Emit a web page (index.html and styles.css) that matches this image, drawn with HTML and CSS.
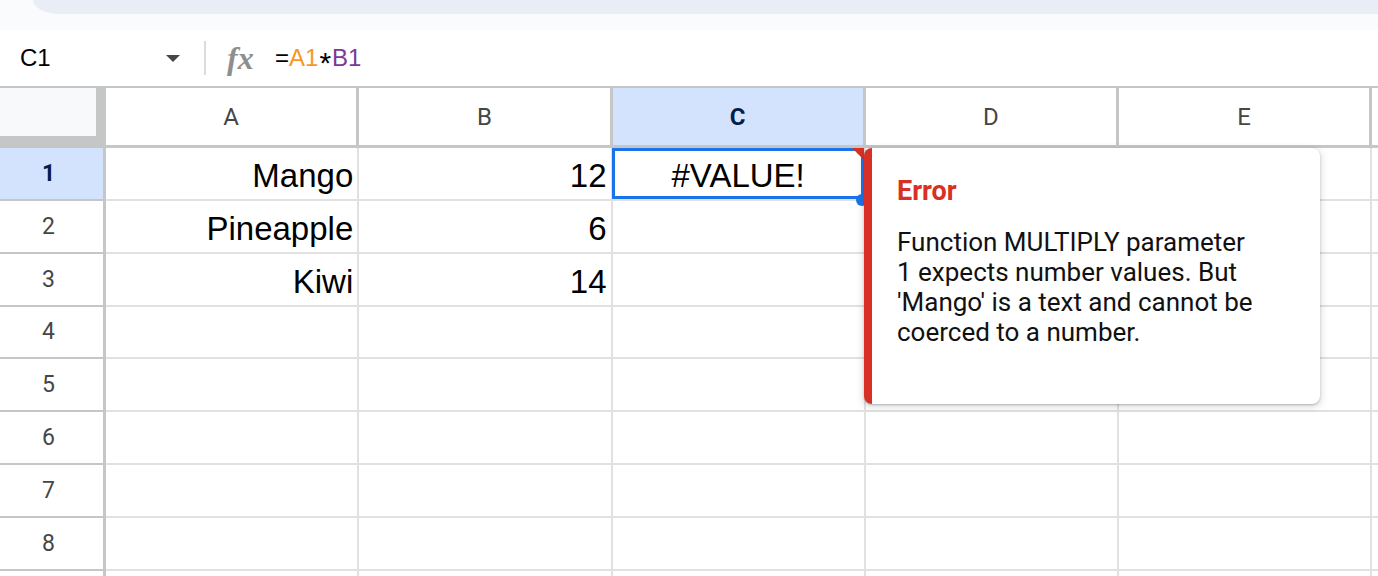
FILE: index.html
```html
<!DOCTYPE html>
<html>
<head>
<meta charset="utf-8">
<link rel="stylesheet" href="styles.css">
</head>
<body>
<div class="topstrip"><div class="pill"></div></div>
<div class="formulabar">
  <div class="namebox"><span class="cellref">C1</span><span class="caret"></span></div>
  <div class="divider"></div>
  <div class="fx">fx</div>
  <div class="formula">=<span class="ref-a">A1</span><span class="op">*</span><span class="ref-b">B1</span></div>
</div>
<div class="sheet">
  <div class="grid">
    <div class="corner"><div class="corner-inner"></div></div>
    <div class="colhead">A</div>
    <div class="colhead">B</div>
    <div class="colhead sel">C</div>
    <div class="colhead">D</div>
    <div class="colhead">E</div>
    <div class="colhead"></div>

    <div class="rowhead sel">1</div>
    <div class="cell">Mango</div>
    <div class="cell">12</div>
    <div class="cell center active">#VALUE!<span class="err-tri"></span><span class="handle"></span></div>
    <div class="cell"></div>
    <div class="cell"></div>
    <div class="cell"></div>

    <div class="rowhead">2</div>
    <div class="cell">Pineapple</div>
    <div class="cell">6</div>
    <div class="cell"></div>
    <div class="cell"></div>
    <div class="cell"></div>
    <div class="cell"></div>

    <div class="rowhead">3</div>
    <div class="cell">Kiwi</div>
    <div class="cell">14</div>
    <div class="cell"></div>
    <div class="cell"></div>
    <div class="cell"></div>
    <div class="cell"></div>

    <div class="rowhead">4</div>
    <div class="cell"></div><div class="cell"></div><div class="cell"></div><div class="cell"></div><div class="cell"></div><div class="cell"></div>

    <div class="rowhead">5</div>
    <div class="cell"></div><div class="cell"></div><div class="cell"></div><div class="cell"></div><div class="cell"></div><div class="cell"></div>

    <div class="rowhead">6</div>
    <div class="cell"></div><div class="cell"></div><div class="cell"></div><div class="cell"></div><div class="cell"></div><div class="cell"></div>

    <div class="rowhead">7</div>
    <div class="cell"></div><div class="cell"></div><div class="cell"></div><div class="cell"></div><div class="cell"></div><div class="cell"></div>

    <div class="rowhead">8</div>
    <div class="cell"></div><div class="cell"></div><div class="cell"></div><div class="cell"></div><div class="cell"></div><div class="cell"></div>

    <div class="rowhead"></div>
    <div class="cell"></div><div class="cell"></div><div class="cell"></div><div class="cell"></div><div class="cell"></div><div class="cell"></div>
  </div>
  <div class="tooltip">
    <div class="tt-title">Error</div>
    <div class="tt-body">Function MULTIPLY parameter<br>1 expects number values. But<br>'Mango' is a text and cannot be<br>coerced to a number.</div>
  </div>
</div>
</body>
</html>
```
FILE: styles.css
```css
html, body {
  margin: 0;
  padding: 0;
}
body {
  width: 1378px;
  height: 576px;
  overflow: hidden;
  background: #ffffff;
  font-family: "Liberation Sans", Arial, sans-serif;
}

.topstrip {
  height: 30px;
  background: #f9fbfd;
}
.pill {
  margin-left: 33px;
  height: 14px;
  background: #e9eef6;
  border-bottom-left-radius: 28px 14px;
}

.formulabar {
  height: 56px;
  display: flex;
  align-items: center;
  background: #ffffff;
}
.namebox {
  width: 186px;
  box-sizing: border-box;
  padding: 0 6px 0 20px;
  display: flex;
  align-items: center;
  justify-content: space-between;
  font-size: 24px;
  color: #000;
}
.caret {
  width: 0;
  height: 0;
  border-left: 7px solid transparent;
  border-right: 7px solid transparent;
  border-top: 7px solid #444746;
}
.divider {
  width: 2px;
  height: 34px;
  background: #dadce0;
  margin-left: 18px;
}
.fx {
  margin-left: 21px;
  width: 32px;
  font-family: "Liberation Serif", serif;
  font-style: italic;
  font-weight: 700;
  font-size: 32px;
  line-height: 1;
  color: #8e8e8e;
}
.formula {
  margin-left: 16px;
  font-size: 24px;
  color: #000;
  display: flex;
  align-items: center;
}
.ref-a { color: #f7981d; }
.ref-b { color: #7e3794; }
.op {
  font-size: 30px;
  line-height: 24px;
  padding-top: 9px;
  margin: 0 1px;
}

.sheet {
  position: relative;
  height: 490px;
  overflow: hidden;
}
.grid {
  display: grid;
  grid-template-columns: 106px repeat(6, 253.25px);
  grid-template-rows: 62px repeat(9, 52.85px);
}

.corner {
  border-top: 2px solid #c4c7c5;
  background: #c4c7c5;
}
.corner-inner {
  width: 96px;
  height: 48px;
  background: #f8f9fa;
}

.colhead {
  box-sizing: border-box;
  border-top: 2px solid #c4c7c5;
  border-bottom: 3px solid #c4c7c5;
  border-right: 3px solid #c4c7c5;
  background: #fff;
  display: flex;
  align-items: center;
  justify-content: center;
  font-family: Roboto, "Liberation Sans", sans-serif;
  font-size: 24px;
  color: #444746;
}
.colhead.sel {
  background: #d3e3fd;
  color: #041e49;
  font-weight: 700;
}

.rowhead {
  box-sizing: border-box;
  border-right: 3px solid #c4c7c5;
  border-bottom: 2px solid #c4c7c5;
  background: #fff;
  display: flex;
  align-items: center;
  justify-content: center;
  padding-right: 6px;
  font-family: Roboto, "Liberation Sans", sans-serif;
  font-size: 23px;
  color: #444746;
}
.rowhead.sel {
  background: #d3e3fd;
  color: #041e49;
  font-weight: 700;
}

.cell {
  box-sizing: border-box;
  border-right: 2px solid #e1e1e1;
  border-bottom: 2px solid #e1e1e1;
  display: flex;
  align-items: flex-end;
  justify-content: flex-end;
  padding: 0 4px 4px 0;
  font-size: 33px;
  line-height: 38px;
  color: #000;
  white-space: nowrap;
}
.cell.center {
  justify-content: center;
  padding-right: 0;
}
.cell.active {
  position: relative;
}
.cell.active::before {
  content: "";
  position: absolute;
  left: -1px;
  top: 0;
  right: 0;
  bottom: 0;
  border: 3px solid #1a73e8;
}
.err-tri {
  position: absolute;
  top: 0;
  right: 0;
  width: 0;
  height: 0;
  border-top: 12px solid #d93025;
  border-left: 12px solid transparent;
}
.handle {
  position: absolute;
  right: -4px;
  bottom: -7px;
  width: 12px;
  height: 12px;
  border-radius: 50%;
  background: #1a73e8;
}

.tooltip {
  position: absolute;
  left: 864px;
  top: 62px;
  width: 456px;
  height: 256px;
  box-sizing: border-box;
  background: #fff;
  border-left: 8px solid #d93025;
  border-radius: 8px;
  box-shadow: 0 2px 6px 2px rgba(60, 64, 67, 0.15), 0 1px 2px rgba(60, 64, 67, 0.3);
  padding: 28px 16px 0 25px;
  font-family: Roboto, "Liberation Sans", sans-serif;
}
.tt-title {
  font-size: 27px;
  line-height: 30px;
  font-weight: 700;
  color: #d93025;
}
.tt-body {
  margin-top: 21px;
  font-size: 26px;
  line-height: 30px;
  color: #111;
  white-space: nowrap;
}
```
